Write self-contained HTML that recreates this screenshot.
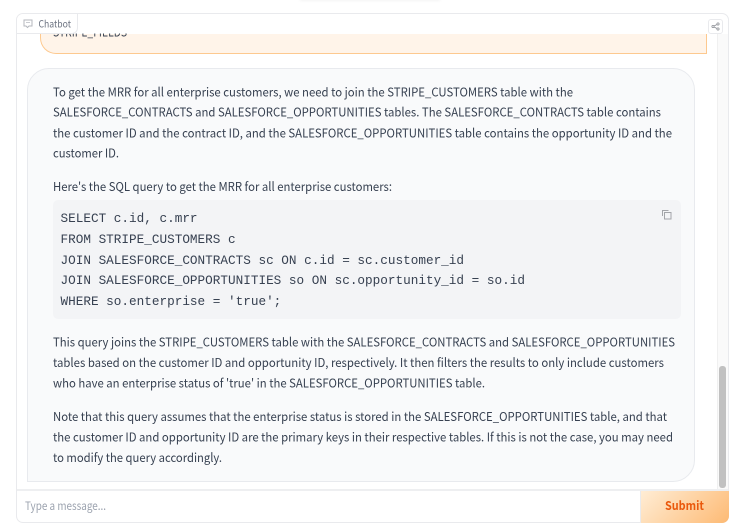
<!DOCTYPE html>
<html><head><meta charset="utf-8"><style>
html,body{margin:0;padding:0;background:#fff}
#r{position:relative;width:740px;height:532px;overflow:hidden;background:#fff;font-family:"Noto Sans CJK SC","Liberation Sans",sans-serif;color:#374151}
#r div{position:absolute;box-sizing:border-box}
.c{left:60.5px;font-family:"Liberation Mono",monospace;font-size:12.7px;line-height:20px;white-space:pre;height:20px;color:#374151}
svg.t{position:absolute;left:0;top:0}
svg.t text{font-family:"Noto Sans CJK SC","Liberation Sans",sans-serif;font-size:12.2px;fill:#374151}
</style></head><body><div id="r">
<div style="left:300px;top:-1px;width:140px;height:1px;box-shadow:0 0 3px rgba(0,0,0,.15)"></div>
<div style="left:16px;top:13px;width:713px;height:510px;border:1px solid #e9eaed;border-radius:7px"></div>
<div style="left:17px;top:34px;width:697px;height:456px;background:#fff;overflow:hidden">
  <div style="left:23px;top:-40px;width:667px;height:60px;background:#fff4e9;border:1px solid #fdc98f;border-top:0;border-radius:0 0 0 16px"></div>
  <div style="left:10px;top:34px;width:668px;height:414px;background:#f9fafb;border:1px solid #e8eaee;border-radius:22px 22px 22px 0"></div>
</div>
<div style="left:53px;top:200px;width:628px;height:119px;background:#f3f4f6;border-radius:5px"></div>
<svg class="t" width="740" height="532" viewBox="0 0 740 532">
<defs><clipPath id="k"><rect x="40" y="33.500" width="660" height="12"/></clipPath></defs>
<text clip-path="url(#k)" x="53" y="36.500" textLength="74" lengthAdjust="spacingAndGlyphs">STRIPE_FIELDS</text>
<text x="53" y="96.300" textLength="520" lengthAdjust="spacingAndGlyphs">To get the MRR for all enterprise customers, we need to join the STRIPE_CUSTOMERS table with the</text>
<text x="53" y="116.700" textLength="608" lengthAdjust="spacingAndGlyphs">SALESFORCE_CONTRACTS and SALESFORCE_OPPORTUNITIES tables. The SALESFORCE_CONTRACTS table contains</text>
<text x="53" y="137.300" textLength="619" lengthAdjust="spacingAndGlyphs">the customer ID and the contract ID, and the SALESFORCE_OPPORTUNITIES table contains the opportunity ID and the</text>
<text x="53" y="157.700" textLength="66" lengthAdjust="spacingAndGlyphs">customer ID.</text>
<text x="53" y="191" textLength="339" lengthAdjust="spacingAndGlyphs">Here's the SQL query to get the MRR for all enterprise customers:</text>
<text x="53" y="346.500" textLength="622" lengthAdjust="spacingAndGlyphs">This query joins the STRIPE_CUSTOMERS table with the SALESFORCE_CONTRACTS and SALESFORCE_OPPORTUNITIES</text>
<text x="53" y="367" textLength="611" lengthAdjust="spacingAndGlyphs">tables based on the customer ID and opportunity ID, respectively. It then filters the results to only include customers</text>
<text x="53" y="387.500" textLength="432" lengthAdjust="spacingAndGlyphs">who have an enterprise status of 'true' in the SALESFORCE_OPPORTUNITIES table.</text>
<text x="53" y="421" textLength="614" lengthAdjust="spacingAndGlyphs">Note that this query assumes that the enterprise status is stored in the SALESFORCE_OPPORTUNITIES table, and that</text>
<text x="53" y="441.500" textLength="620" lengthAdjust="spacingAndGlyphs">the customer ID and opportunity ID are the primary keys in their respective tables. If this is not the case, you may need</text>
<text x="53" y="462" textLength="169" lengthAdjust="spacingAndGlyphs">to modify the query accordingly.</text>
</svg>
<div class="c" style="top:209px">SELECT c.id, c.mrr</div>
<div class="c" style="top:230px">FROM STRIPE_CUSTOMERS c</div>
<div class="c" style="top:251px">JOIN SALESFORCE_CONTRACTS sc ON c.id = sc.customer_id</div>
<div class="c" style="top:271px">JOIN SALESFORCE_OPPORTUNITIES so ON sc.opportunity_id = so.id</div>
<div class="c" style="top:292px">WHERE so.enterprise = 'true';</div>
<svg style="position:absolute;left:661px;top:209px" width="12" height="12" viewBox="0 0 12 12" fill="none" stroke="#a3a5a9" stroke-width="1"><path d="M3.500 3.500h6.500v6.500h-6.500z"/><path d="M1.500 7v-5.500h6"/></svg>
<div style="left:17px;top:14px;width:61px;height:20px;background:#fff;border-right:1px solid #e9eaed;border-bottom:1px solid #e9eaed;border-radius:6px 0 6px 0"></div>
<svg style="position:absolute;left:23px;top:19px" width="10" height="10" viewBox="0 0 10 10" fill="none" stroke="#b4b7bd" stroke-width="1"><path d="M1 1h8v6h-3l-1.500 1.500-1.500-1.500h-2z"/><path d="M3 3.500h4" stroke-width=".7"/></svg>
<div style="left:717px;top:34px;width:11px;height:456px;background:#fafafa;border-left:1px solid #f0f0f0"></div>
<div style="left:719px;top:366px;width:7px;height:122px;background:#c1c1c1;border-radius:3px"></div>
<div style="left:708px;top:19px;width:15px;height:15px;background:#fff;border:1px solid #e9eaed;border-radius:3px"></div>
<svg style="position:absolute;left:711px;top:22px" width="9" height="9" viewBox="0 0 9 9" fill="none" stroke="#8a8d93" stroke-width=".8"><circle cx="2" cy="4.500" r="1.100"/><circle cx="7" cy="2" r="1.100"/><circle cx="7" cy="7" r="1.100"/><path d="M3 4l3-1.500M3 5l3 1.500"/></svg>
<div style="left:17px;top:489px;width:711px;height:2px;background:#eeeff1"></div>
<div style="left:640px;top:491px;width:89px;height:32px;background:linear-gradient(135deg,#ffedd5,#fdba74);border-left:1px solid #e9eaed;border-radius:0 0 7px 0"></div>
<svg class="t" width="740" height="532" viewBox="0 0 740 532">
<text x="38.500" y="27.500" textLength="32.500" lengthAdjust="spacingAndGlyphs" style="font-size:10px;fill:#6b7280">Chatbot</text>
<text x="25" y="510" textLength="81" lengthAdjust="spacingAndGlyphs" style="font-size:11.600px;fill:#9ca3af">Type a message...</text>
<text x="665" y="510" textLength="39" lengthAdjust="spacingAndGlyphs" style="font-size:12.300px;font-weight:700;fill:#ea580c">Submit</text>
</svg>
</div></body></html>
